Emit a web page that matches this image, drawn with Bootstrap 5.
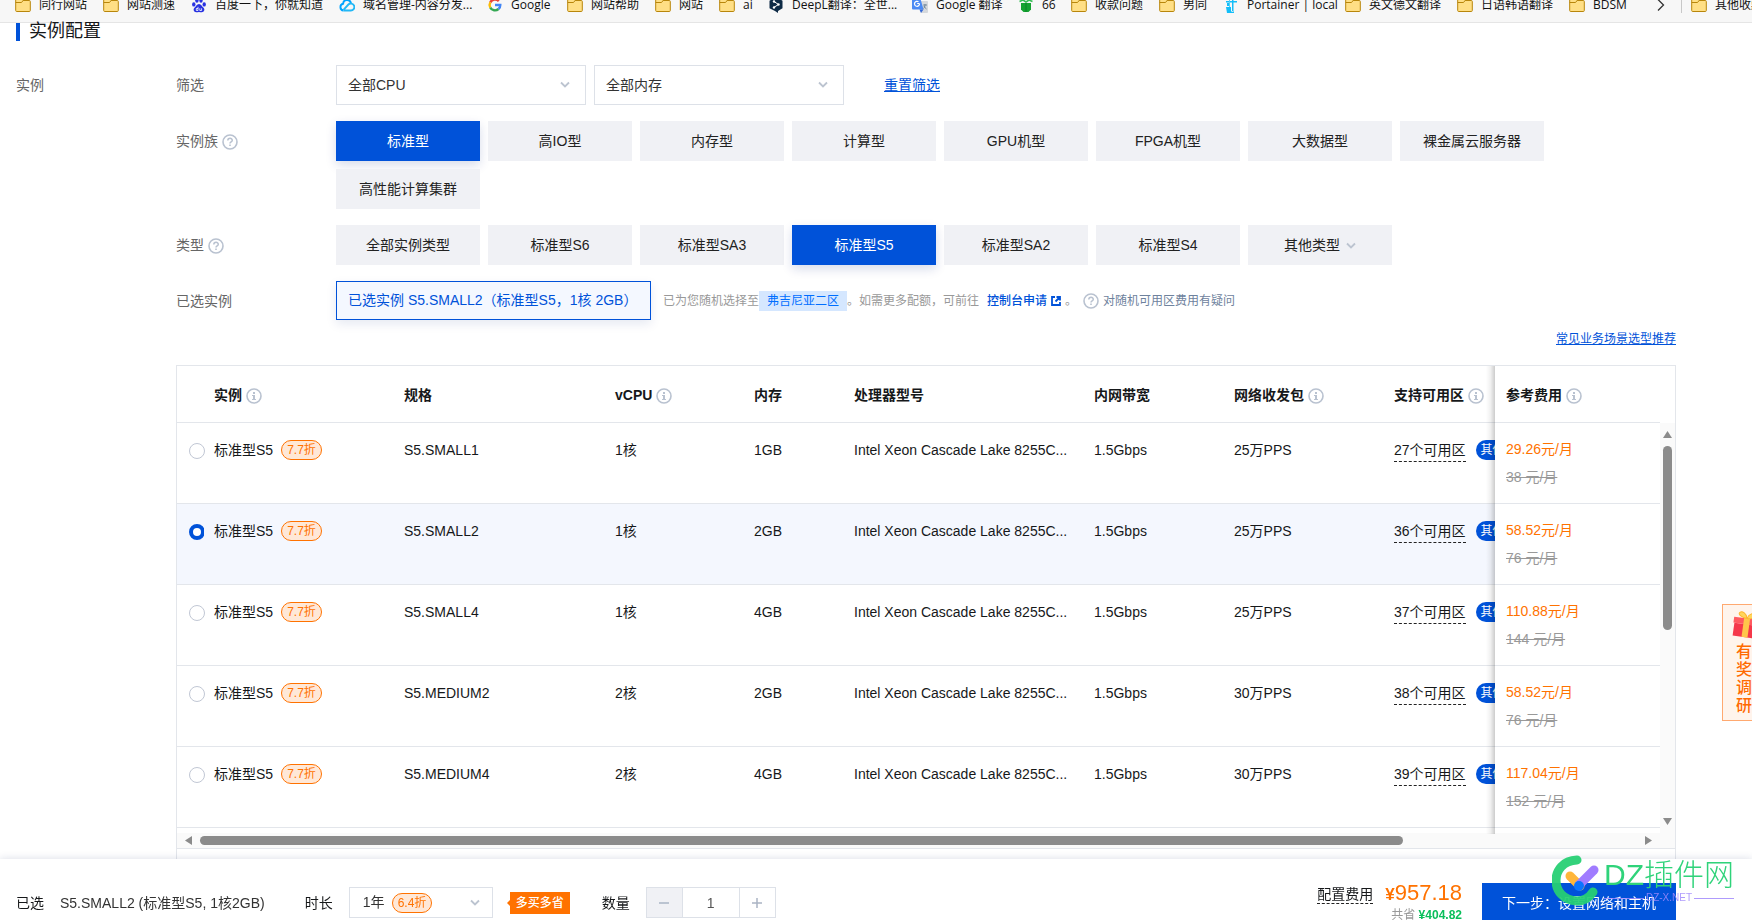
<!DOCTYPE html>
<html lang="zh-CN">
<head>
<meta charset="utf-8">
<meta name="viewport" content="width=device-width, initial-scale=1">
<title>实例配置</title>
<link href="https://cdn.jsdelivr.net/npm/bootstrap@5.3.0/dist/css/bootstrap.min.css" rel="stylesheet">
<style>
:root{--blue:#0052d9;--orange:#ff7200;--line:#e3e6eb}
body{font-family:"Liberation Sans","Noto Sans CJK SC",sans-serif;font-size:14px;line-height:20px;color:#16181a;background:#fff}
a{color:var(--blue)}
/* bookmarks */
.marks{background:#f7f7f7;height:23px;border-bottom:1px solid #e5e5e5;overflow:hidden;font-family:"Open Sans","Noto Sans CJK SC",sans-serif;font-size:12px;line-height:16px}
.marks a{color:#111;text-decoration:none;display:flex;gap:8px;align-items:center;white-space:nowrap}
.marks svg{width:16px;height:16px;flex:none}
.marks-list{display:grid;grid-template-columns:88px 88px 148px 148px 80px 88px 64px 49px 144px 106px 53px 88px 64px 122px 112px 112px 88px;padding:0 0 9px 15px;align-items:end;min-width:0;overflow:hidden}
.marks-more{width:99px;padding-bottom:9px;overflow:hidden}
.marks-more i{width:1px;height:16px;background:#c8c8c8;margin:0 9px 0 12px;flex:none}
/* form */
.page-body{padding:0 76px 0 16px}
.sec-title{font-size:18px;font-weight:400;line-height:16px;height:18px;border-left:4px solid var(--blue);padding-left:9px;margin:0 0 24px}
.lbl{width:160px;flex:none;line-height:40px;color:#666}
.form-col{min-width:0}
.stack{display:flex;flex-direction:column;gap:16px}
.pick{height:40px;width:250px;border:1px solid #dde1e8;border-radius:0;font-size:14px;padding:0 32px 0 11px;color:#333;background:#fff url("data:image/svg+xml,%3Csvg xmlns='http://www.w3.org/2000/svg' viewBox='0 0 10 10'%3E%3Cpath d='M1 2.5l4 4 4-4' fill='none' stroke='%23bcc4d0' stroke-width='1.8'/%3E%3C/svg%3E") no-repeat right 15px center/10px 10px}
.opt{width:144px;height:40px;border:0;border-radius:0;background:#f0f1f5;font-size:14px;color:#222;padding:0}
.opt:hover{background:#e6e8ee}
.opt.active,.opt.active:hover{background:var(--blue);color:#fff;box-shadow:0 4px 10px rgba(0,40,130,.16)}
.opt svg{margin-left:2px}
.chosen{height:39px;line-height:37px;border:1px solid var(--blue);background:#f4f8ff;color:var(--blue);padding:0 10px 0 11px;width:315px;white-space:nowrap;box-shadow:0 4px 10px rgba(0,40,130,.1)}
.hint{font-size:12px;color:#999;margin-left:12px;white-space:nowrap}
.hint .ic{margin:0 4px 0 6px}
.zone{background:#d5e7ff;color:#006eff;padding:0 8px;height:20px}
.doubt{color:#6e829d}
.reco{padding:8px 0 16px;font-size:12px;text-align:right}
.ic{width:16px;height:16px;flex:none}
/* table */
.panel{border:1px solid var(--line);border-bottom:0}
.specs{table-layout:fixed;width:100%;border-collapse:separate;border-spacing:0}
.specs th{height:57px;padding:1px 0 0 10px;border-bottom:1px solid var(--line);white-space:nowrap;vertical-align:middle}
.specs td{height:81px;padding:17px 0 0 10px;border-bottom:1px solid var(--line);white-space:nowrap;vertical-align:top}
.specs .picked td{background:#f4f7fe}
.specs .fee{position:relative;padding-left:11px;background:#fff!important}
.specs td.fee{padding-top:16px}
.specs .fee::before{content:"";position:absolute;top:0;bottom:-1px;right:100%;width:9px;background:linear-gradient(to left,rgba(0,0,0,.2),rgba(0,0,0,.06) 50%,rgba(0,0,0,0))}
.specs .spare td{height:5px;padding:0;border:0}
.specs .dot{padding-left:12px}
.specs input{appearance:none;display:block;width:16px;height:16px;margin:3px 0 0;border:1px solid #c1c7d4;border-radius:50%;background:#fff}
.specs input:checked{border:4px solid var(--blue)}
.c0{width:27px}.c1{width:190px}.c2{width:211px}.c3{width:139px}.c4{width:100px}.c6{width:140px}.c7{width:160px}.c8{width:111px}.c9{width:165px}
.off{display:inline-block;height:20px;line-height:18px;border:1px solid var(--orange);border-radius:10px;background:#ffe8d7;color:var(--orange);font-size:12px;padding:0 5px}
.model{display:flex;gap:8px}
.zones{border-bottom:1px dashed #222;height:22px}
.others{background:var(--blue);color:#fff;border-radius:10px;font-size:12px;height:20px;padding:0 5px;margin-left:10px}
.now{color:var(--orange);line-height:20px}
.was{color:#999;text-decoration:line-through;margin-top:8px}
.vbar{width:15px;flex:none;padding:65px 3px 8px;gap:8px}
.vbar .grip{width:9px;height:184px;border-radius:5px;background:#8b8b8b}
.hbar{height:16px;background:#fafafa;border-bottom:1px solid var(--line);padding:0 23px 0 8px}
.hbar .grip{height:9px;width:82%;border-radius:5px;background:#8b8b8b;margin-left:8px}
.vtrack{background:linear-gradient(#fff 57px,#fafafa 57px)}
/* checkout bar */
.dock{height:61px;background:#fff;box-shadow:0 0 8px rgba(20,40,100,.16);padding:0 76px 0 16px;clip-path:inset(-12px 0 0 0)}
.order{padding-top:28px}
.order-name{color:#333;margin-left:16px;white-space:nowrap}
.dock .pick{width:144px;height:31px;padding-left:13px;background-position:right 12px center}
.dock .off{position:absolute;left:43px;top:6px;pointer-events:none}
.promo{position:relative;background:var(--orange);color:#fff;font-size:12px;line-height:22px;padding:0 6px;margin:0 0 0 17px;font-weight:500}
.promo::before{content:"";position:absolute;right:100%;top:8px;border:3px solid transparent;border-left:0;border-right-color:var(--orange)}
.stepper{height:31px;width:130px;border:1px solid #dde1e8}
.stepper button{width:35px;border:0;background:#fff;padding:0;line-height:0}
.stepper button:first-child{background:#f0f1f5}
.stepper input{width:58px;border:0;border-left:1px solid #dde1e8;border-right:1px solid #dde1e8;text-align:center;color:#555;border-radius:0;padding:0}
.cost-link{margin-top:26px;height:19px;line-height:18px}
.sums{text-align:right;padding:22px 20px 0 12px}
.total{font-size:22px;line-height:24px;color:var(--orange)}
.total b{font-size:17px}
.saved{font-size:12px;line-height:16px;color:#999}
.saved b{color:#0abf5b}
.next{width:194px;height:40px;border:0;border-radius:0;background:var(--blue);color:#fff;font-size:14px;margin-top:24px;padding:0}
/* floating items */
.survey{position:fixed;right:0;top:604px;width:30px;height:117px;background:#fff4ec;border:1px solid #ffa970;border-right:0;overflow:hidden;z-index:1040;color:#ff6a00;font-weight:500;font-size:16px;line-height:18px;text-decoration:none;padding:5px 0 0 8px}
.survey span{display:block;width:16px;margin-left:5px}
.survey svg{display:block;width:32px;height:33px}
.stamp{position:fixed;right:18px;bottom:14px;z-index:1050;color:#2fd37a;pointer-events:none;gap:4px}
.stamp-name{font-size:30px;font-weight:300;line-height:34px;white-space:nowrap}
.stamp-site{font-size:10px;line-height:12px;color:#a18afc;gap:2px;opacity:.85}
.stamp-site::before,.stamp-site::after{content:"";flex:1;height:1px;background:#a18afc}
</style>
</head>
<body>
<svg class="d-none" xmlns="http://www.w3.org/2000/svg">
<symbol id="folder" viewBox="0 0 16 16"><path d="M.7 1.500h5.600l1.800 2h6.200a1 1 0 0 1 1 1v9a1 1 0 0 1-1 1H1.700a1 1 0 0 1-1-1z" fill="#ffdf85" stroke="#b8860b"/><path d="M.7 5.500h5.800l1.600-2" fill="none" stroke="#b8860b"/></symbol>
<symbol id="info" viewBox="0 0 16 16"><circle cx="8" cy="8" r="7" fill="none" stroke="#b9c2d0" stroke-width="1.600"/><path d="M7 4h2v2H7zM6 7h3v4h1v1H6v-1h1V8H6z" fill="#b9c2d0"/></symbol>
<symbol id="ask" viewBox="0 0 16 16"><circle cx="8" cy="8" r="7" fill="none" stroke="#b9c2d0" stroke-width="1.600"/><path d="M5.800 6.600C5.800 3.600 10.300 3.700 10.300 6.300 10.300 8 8 7.900 8 9.600" fill="none" stroke="#b9c2d0" stroke-width="1.500"/><path d="M7.200 10.500h1.600v1.600H7.200z" fill="#b9c2d0"/></symbol>
</svg>

<nav class="marks d-flex align-items-end" aria-label="书签">
<div class="marks-list flex-grow-1">
<a href="#"><svg><use href="#folder"/></svg>同行网站</a>
<a href="#"><svg><use href="#folder"/></svg>网站测速</a>
<a href="#"><svg viewBox="0 0 16 16" fill="#2932e1"><ellipse cx="2.800" cy="7.400" rx="1.700" ry="2.200"/><ellipse cx="5.900" cy="3.400" rx="1.700" ry="2.400"/><ellipse cx="10" cy="3.400" rx="1.700" ry="2.400"/><ellipse cx="13.200" cy="7.400" rx="1.700" ry="2.200"/><path d="M8 7c2.200 0 2.800 2.300 4.300 3.600 2 1.800 1 4.600-1.500 4.600-1.100 0-1.700-.3-2.800-.3s-1.700.3-2.800.3c-2.500 0-3.500-2.800-1.500-4.600C5.200 9.300 5.800 7 8 7z"/><path d="M7 9.800v3.700H5.300v-2H7M8.800 11.300v2.200h1.800v-2.200" fill="none" stroke="#fff" stroke-width=".8"/></svg>百度一下，你就知道</a>
<a href="#"><svg viewBox="0 0 16 16" fill="none" stroke-width="1.900"><path d="M4.500 13.500a3.400 3.400 0 0 1-.4-6.700C4.500 1.800 11 1.600 12 6.500" stroke="#00a3ff"/><path d="M4.500 13.500h7.300a3.500 3.500 0 1 0-2.400-6L4.500 12.800" stroke="#23b8f5"/></svg>域名管理-内容分发...</a>
<a href="#"><svg viewBox="0 0 16 16" fill="none" stroke-width="2.400"><path d="M3.300 5.400A5.300 5.300 0 0 1 11.800 4.200" stroke="#ea4335"/><path d="M3.300 5.400a5.300 5.300 0 0 0 0 5.200" stroke="#fbbc05"/><path d="M3.300 10.600a5.300 5.300 0 0 0 8.200 1.400" stroke="#34a853"/><path d="M8 8h5.300a5.300 5.300 0 0 1-1.800 4" stroke="#4285f4"/></svg>Google</a>
<a href="#"><svg><use href="#folder"/></svg>网站帮助</a>
<a href="#"><svg><use href="#folder"/></svg>网站</a>
<a href="#"><svg><use href="#folder"/></svg>ai</a>
<a href="#"><svg viewBox="0 0 16 16"><path d="M8 0l6.500 3.700v7.600L10 14v2l-3-2-5.500-2.700V3.700z" fill="#0f2b46"/><path d="M6 4.500l4.500 3L6 10.300" fill="none" stroke="#fff"/><circle cx="6" cy="4.500" r="1.200" fill="#fff"/><circle cx="10.500" cy="7.500" r="1.200" fill="#fff"/><circle cx="6" cy="10.500" r="1.200" fill="#fff"/></svg>DeepL翻译：全世...</a>
<a href="#"><svg viewBox="0 0 16 16"><path d="M6 4h9a1 1 0 0 1 1 1v10a1 1 0 0 1-1 1H9z" fill="#d5d8dc"/><path d="M1 0h7l3.500 12.500H1a1 1 0 0 1-1-1V1z" fill="#4a8af4"/><path d="M7.500 12.500h4L9 16z" fill="#3367d6"/><path d="M7.500 6.500H5.200M7.500 6.700A2.500 2.500 0 1 1 6.500 4.800" fill="none" stroke="#fff" stroke-width="1.200"/><path d="M11.200 8H15M13 7v1c0 1.500-.7 2.800-1.500 3.500M12 9c.6 1.500 1.500 2.300 2.500 3" fill="none" stroke="#71869a"/></svg>Google 翻译</a>
<a href="#"><svg viewBox="0 0 16 16"><path d="M3 6h10v6.500L10.500 15h-5L3 12.500z" fill="#16a332"/><path d="M1.500 4.500L5 3l3 2 3-2 3.500 1.500M5 1.500h6" fill="none" stroke="#36bd55" stroke-width="1.600"/><path d="M8 6v9" stroke="#0c8428"/></svg>66</a>
<a href="#"><svg><use href="#folder"/></svg>收款问题</a>
<a href="#"><svg><use href="#folder"/></svg>男同</a>
<a href="#"><svg viewBox="0 0 16 16"><path d="M9 0h1.500v14H9zM3 4h11v1.500H3z" fill="#13bef9"/><path d="M4 6h3v3H4zM3 10h5v4a2 2 0 0 0 3 0v2H4z" fill="#13bef9"/><path d="M6 0h1v10H6z" fill="#4fd0fb"/></svg>Portainer | local</a>
<a href="#"><svg><use href="#folder"/></svg>英文德文翻译</a>
<a href="#"><svg><use href="#folder"/></svg>日语韩语翻译</a>
<a href="#"><svg><use href="#folder"/></svg>BDSM</a>
</div>
<div class="marks-more d-flex flex-shrink-0">
<a href="#" aria-label="更多书签"><svg viewBox="0 0 16 16"><path d="M5 2.500l5.500 5.500L5 13.500" fill="none" stroke="#333" stroke-width="1.300"/></svg></a><i></i>
<a href="#"><svg><use href="#folder"/></svg>其他收藏夹</a>
</div>
</nav>

<main class="page-body">
<h2 class="sec-title">实例配置</h2>
<div class="d-flex">
<div class="lbl">实例</div>
<div class="form-col flex-grow-1">
<form class="stack">
<div class="d-flex">
<label class="lbl" for="cpu">筛选</label>
<div class="d-flex gap-2 align-items-center">
<select id="cpu" class="form-select pick"><option>全部CPU</option></select>
<select id="mem" class="form-select pick" aria-label="内存"><option>全部内存</option></select>
<a href="#" class="ms-4 ps-2">重置筛选</a>
</div>
</div>
<div class="d-flex">
<div class="lbl">实例族 <svg class="ic"><use href="#ask"/></svg></div>
<div class="d-flex flex-wrap gap-2">
<button type="button" class="btn opt active">标准型</button><button type="button" class="btn opt">高IO型</button><button type="button" class="btn opt">内存型</button><button type="button" class="btn opt">计算型</button><button type="button" class="btn opt">GPU机型</button><button type="button" class="btn opt">FPGA机型</button><button type="button" class="btn opt">大数据型</button><button type="button" class="btn opt">裸金属云服务器</button><button type="button" class="btn opt">高性能计算集群</button>
</div>
</div>
<div class="d-flex">
<div class="lbl">类型 <svg class="ic"><use href="#ask"/></svg></div>
<div class="d-flex flex-wrap gap-2">
<button type="button" class="btn opt">全部实例类型</button><button type="button" class="btn opt">标准型S6</button><button type="button" class="btn opt">标准型SA3</button><button type="button" class="btn opt active">标准型S5</button><button type="button" class="btn opt">标准型SA2</button><button type="button" class="btn opt">标准型S4</button><button type="button" class="btn opt">其他类型 <svg width="10" height="10" viewBox="0 0 10 10"><path d="M1 2.500l4 4 4-4" fill="none" stroke="#bcc4d0" stroke-width="1.800"/></svg></button>
</div>
</div>
<div class="d-flex">
<div class="lbl">已选实例</div>
<div class="chosen">已选实例 S5.SMALL2（标准型S5，1核 2GB）</div>
<div class="hint d-flex align-items-center">已为您随机选择至<span class="zone">弗吉尼亚二区</span>。如需更多配额，可前往
<a href="#" class="ms-2 fw-medium text-decoration-none d-flex align-items-center">控制台申请<svg class="mx-1" width="10" height="10" viewBox="0 0 10 10"><path d="M4 1H1v8h8V6M5.500 1H9v3.500M9 1L4.500 5.500" fill="none" stroke="#0052d9" stroke-width="1.800"/></svg></a>。
<svg class="ic"><use href="#ask"/></svg><span class="doubt">对随机可用区费用有疑问</span></div>
</div>
</form>
<div class="reco"><a href="#">常见业务场景选型推荐</a></div>

<div class="panel">
<div class="d-flex">
<table class="specs">
<colgroup><col class="c0"><col class="c1"><col class="c2"><col class="c3"><col class="c4"><col><col class="c6"><col class="c7"><col class="c8"><col class="c9"></colgroup>
<thead><tr><th></th><th>实例 <svg class="ic"><use href="#info"/></svg></th><th>规格</th><th>vCPU <svg class="ic"><use href="#info"/></svg></th><th>内存</th><th>处理器型号</th><th>内网带宽</th><th>网络收发包 <svg class="ic"><use href="#info"/></svg></th><th>支持可用区 <svg class="ic"><use href="#info"/></svg></th><th class="fee">参考费用 <svg class="ic"><use href="#info"/></svg></th></tr></thead>
<tbody>
<tr><td class="dot"><input type="radio" name="spec" id="s1"></td><td><div class="model"><label for="s1">标准型S5</label><span class="off">7.7折</span></div></td><td>S5.SMALL1</td><td>1核</td><td>1GB</td><td>Intel Xeon Cascade Lake 8255C...</td><td>1.5Gbps</td><td>25万PPS</td><td class="overflow-hidden"><div class="d-flex"><span class="zones">27个可用区</span><span class="others">其他</span></div></td><td class="fee"><div class="now">29.26元/月</div><div class="was">38 元/月</div></td></tr>
<tr class="picked"><td class="dot"><input type="radio" name="spec" id="s2" checked></td><td><div class="model"><label for="s2">标准型S5</label><span class="off">7.7折</span></div></td><td>S5.SMALL2</td><td>1核</td><td>2GB</td><td>Intel Xeon Cascade Lake 8255C...</td><td>1.5Gbps</td><td>25万PPS</td><td class="overflow-hidden"><div class="d-flex"><span class="zones">36个可用区</span><span class="others">其他</span></div></td><td class="fee"><div class="now">58.52元/月</div><div class="was">76 元/月</div></td></tr>
<tr><td class="dot"><input type="radio" name="spec" id="s3"></td><td><div class="model"><label for="s3">标准型S5</label><span class="off">7.7折</span></div></td><td>S5.SMALL4</td><td>1核</td><td>4GB</td><td>Intel Xeon Cascade Lake 8255C...</td><td>1.5Gbps</td><td>25万PPS</td><td class="overflow-hidden"><div class="d-flex"><span class="zones">37个可用区</span><span class="others">其他</span></div></td><td class="fee"><div class="now">110.88元/月</div><div class="was">144 元/月</div></td></tr>
<tr><td class="dot"><input type="radio" name="spec" id="s4"></td><td><div class="model"><label for="s4">标准型S5</label><span class="off">7.7折</span></div></td><td>S5.MEDIUM2</td><td>2核</td><td>2GB</td><td>Intel Xeon Cascade Lake 8255C...</td><td>1.5Gbps</td><td>30万PPS</td><td class="overflow-hidden"><div class="d-flex"><span class="zones">38个可用区</span><span class="others">其他</span></div></td><td class="fee"><div class="now">58.52元/月</div><div class="was">76 元/月</div></td></tr>
<tr><td class="dot"><input type="radio" name="spec" id="s5"></td><td><div class="model"><label for="s5">标准型S5</label><span class="off">7.7折</span></div></td><td>S5.MEDIUM4</td><td>2核</td><td>4GB</td><td>Intel Xeon Cascade Lake 8255C...</td><td>1.5Gbps</td><td>30万PPS</td><td class="overflow-hidden"><div class="d-flex"><span class="zones">39个可用区</span><span class="others">其他</span></div></td><td class="fee"><div class="now">117.04元/月</div><div class="was">152 元/月</div></td></tr>
<tr class="spare"><td colspan="9"></td><td class="fee"></td></tr>
</tbody>
</table>
<div class="vbar vtrack d-flex flex-column">
<svg width="9" height="7" viewBox="0 0 9 7"><path d="M4.500 0L9 7H0z" fill="#8b8b8b"/></svg>
<div class="grip"></div>
<svg class="mt-auto" width="9" height="7" viewBox="0 0 9 7"><path d="M0 0h9L4.500 7z" fill="#8b8b8b"/></svg>
</div>
</div>
<div class="hbar d-flex align-items-center">
<svg width="7" height="9" viewBox="0 0 7 9"><path d="M7 0v9L0 4.500z" fill="#8b8b8b"/></svg>
<div class="grip"></div>
<svg class="ms-auto" width="7" height="9" viewBox="0 0 7 9"><path d="M0 0v9l7-4.500z" fill="#8b8b8b"/></svg>
</div>
<div class="pt-5"></div>
</div>
</div>
</div>
</main>

<footer class="dock fixed-bottom d-flex align-items-start">
<div class="order d-flex align-items-center">
<span>已选</span><span class="order-name">S5.SMALL2 (标准型S5, 1核2GB)</span>
<label for="term" class="ms-4 ps-3">时长</label>
<div class="position-relative ms-3"><select id="term" class="form-select pick"><option>1年</option></select><span class="off">6.4折</span></div>
<span class="promo">多买多省</span>
<label for="qty" class="ms-4 ps-2">数量</label>
<div class="stepper d-flex ms-3"><button type="button" aria-label="减少"><svg width="10" height="10" viewBox="0 0 10 10"><path d="M0 5h10" stroke="#aab4c4" stroke-width="1.500"/></svg></button><input id="qty" type="text" value="1"><button type="button" aria-label="增加"><svg width="10" height="10" viewBox="0 0 10 10"><path d="M0 5h10M5 0v10" stroke="#aab4c4" stroke-width="1.500"/></svg></button></div>
</div>
<div class="d-flex align-items-start ms-auto">
<span class="zones cost-link">配置费用</span>
<div class="sums"><div class="total"><b>¥</b>957.18</div><div class="saved">共省 <b>¥404.82</b></div></div>
<button type="button" class="btn next">下一步：设置网络和主机</button>
</div>
</footer>

<a href="#" class="survey"><svg viewBox="0 0 32 32"><g transform="rotate(8 16 16)"><path d="M2 8h28v6H2z" fill="#ff5a5f"/><path d="M3 14h26v13H3z" fill="#f5384a"/><path d="M12 8h6v19h-6z" fill="#ffc64a"/><path d="M15 8C9 8 5 5 7 3s7 0 8 5c1-5 6-7 8-5s-2 5-8 5z" fill="#ffd65c" stroke="#ffb52e"/></g></svg><span>有</span><span>奖</span><span>调</span><span>研</span></a>

<div class="stamp d-flex">
<svg width="48" height="52" viewBox="0 0 48 52" fill="none" stroke-linecap="round"><path d="M25 6C-3 7-3 46 25 47c7 0 12-3 16-9" stroke="#26cf73" stroke-width="9" opacity=".94"/><path d="M18 22l10 10" stroke="#ffb63a" stroke-width="9"/><path d="M42 16L27 31" stroke="#a07cff" stroke-width="9"/><circle cx="27" cy="32" r="5" fill="#0a74ff"/></svg>
<div class="pt-1"><div class="stamp-name">DZ插件网</div><div class="stamp-site d-flex align-items-center">DZ-X.NET</div></div>
</div>
<script src="https://cdn.jsdelivr.net/npm/bootstrap@5.3.0/dist/js/bootstrap.bundle.min.js"></script>
</body>
</html>
